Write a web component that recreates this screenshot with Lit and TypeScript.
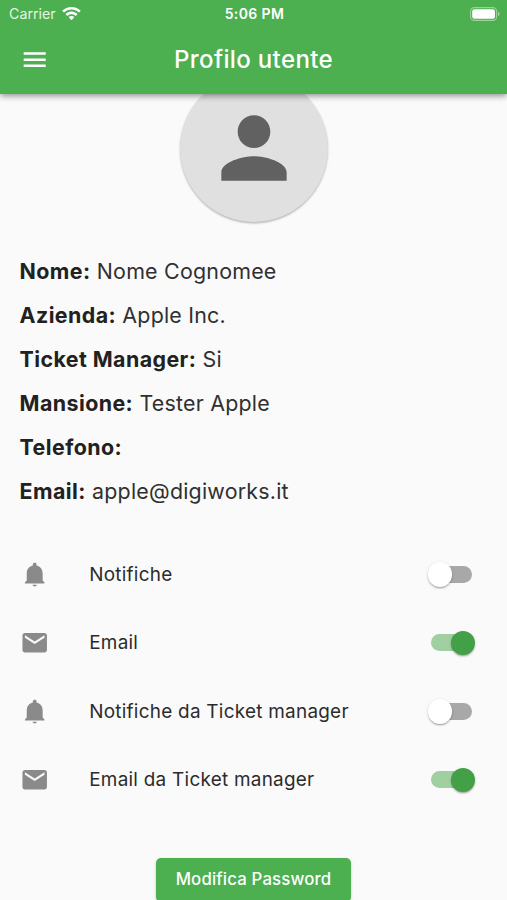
import { LitElement, html, css, svg } from "lit";
import { customElement, property } from "lit/decorators.js";
import { classMap } from "lit/directives/class-map.js";

const ICONS = {
  menu: "M3 18h18v-2H3v2zm0-5h18v-2H3v2zm0-7v2h18V6H3z",
  person: "M12 12c2.21 0 4-1.79 4-4s-1.79-4-4-4-4 1.79-4 4 1.79 4 4 4zm0 2c-2.67 0-8 1.34-8 4v2h16v-2c0-2.66-5.33-4-8-4z",
  bell: "M12 21.6c.9 0 1.6-.5 1.7-1.300h-3.400c.1.8.8 1.300 1.700 1.300zM18.500 16.800v-6c0-3.200-2-5.700-5-6.400V3.700c0-.83-.67-1.400-1.500-1.400s-1.500.57-1.500 1.400v.7c-3 .7-5 3.200-5 6.400v6L4 18.300v.9h16v-.9l-1.500-1.500z",
  mail: "M20 4H4c-1.1 0-1.99.9-1.99 2L2 18c0 1.1.9 2 2 2h16c1.1 0 2-.9 2-2V6c0-1.1-.9-2-2-2zm0 4l-8 5-8-5V6l8 5 8-5v2z",
};
type IconName = keyof typeof ICONS;

@customElement("md-icon")
class MdIcon extends LitElement {
  @property() name: IconName = "menu";
  static styles = css`
    :host { display: block; width: 29.4px; height: 29.4px; flex: none; }
    svg { display: block; width: 100%; height: 100%; fill: currentColor; }
  `;
  render() {
    return html`<svg viewBox="0 0 24 24">${svg`<path d=${ICONS[this.name]}></path>`}</svg>`;
  }
}

@customElement("md-switch")
class MdSwitch extends LitElement {
  @property({ type: Boolean }) on = false;
  static styles = css`
    :host { display: block; flex: none; }
    .track {
      display: flex; align-items: center; width: 40.4px; height: 17.2px;
      border-radius: 9px; background: #a8a8a8;
    }
    .track.on { background: #a0cfa2; justify-content: flex-end; }
    .thumb {
      flex: none; width: 24.5px; height: 24.5px; border-radius: 50%; background: #fff;
      margin: 0 -3.6px;
      box-shadow: 0 2px 2px -1px rgba(0,0,0,.2), 0 1px 1.5px rgba(0,0,0,.14), 0 1px 3.5px rgba(0,0,0,.12);
    }
    .on .thumb { background: #43a047; }
  `;
  render() {
    return html`<div class=${classMap({ track: true, on: this.on })}><div class="thumb"></div></div>`;
  }
}

@customElement("app-root")
class AppRoot extends LitElement {
  static styles = css`
    :host {
      display: flex; flex-direction: column; height: 900px; overflow: hidden;
      background: #fafafa; color: #212121;
      font-family: Inter, "Liberation Sans", sans-serif;
    }
    .top {
      position: relative; z-index: 1; flex: none; height: 94px; background: #4caf50; color: #fff;
      box-shadow: 0 2px 5px -1px rgba(0,0,0,.26), 0 4px 5px rgba(0,0,0,.12), 0 1px 9px rgba(0,0,0,.1);
    }
    .status {
      display: grid; grid-template-columns: 1fr auto 1fr; align-items: center;
      height: 27px; padding: 0 7px 0 9px;
    }
    .carrier { display: flex; align-items: center; gap: 6px; font-size: 14.2px; color: #e6f5e6; letter-spacing: .03px; }
    .clock { font-size: 14px; font-weight: 600; letter-spacing: .4px; }
    .wifi { display: block; width: 19px; height: 14px; fill: #fff; }
    .battery { display: block; width: 30px; height: 14px; justify-self: end; }
    .bar { display: grid; grid-template-columns: 1fr auto 1fr; align-items: center; height: 65.4px; padding: 0 20.3px; }
    .title { font-size: 24.1px; font-weight: 500; letter-spacing: .32px; }
    .avatar {
      flex: none; align-self: center; display: flex; align-items: center; justify-content: center;
      width: 148px; height: 148px; margin-top: -20px; border-radius: 50%;
      background: #e0e0e0; color: #616161; box-shadow: 0 1.5px 2px rgba(0,0,0,.26);
    }
    .avatar md-icon { width: 98px; height: 98px; }
    .info { margin: 27px 0 0 19.6px; }
    .line { height: 44px; line-height: 44px; font-size: 21.4px; letter-spacing: .22px; white-space: pre; color: #303030; }
    .line b { font-weight: 700; letter-spacing: .42px; color: #212121; }
    .list { margin-top: 27px; }
    .row { display: flex; align-items: center; height: 68.5px; padding: 0 35.5px 0 20.3px; }
    .row md-icon { color: #8a8a8a; }
    .label { flex: 1; padding-left: 39.5px; font-size: 18.9px; letter-spacing: .27px; white-space: nowrap; color: #2b2b2b; }
    .button {
      flex: none; align-self: center; margin-top: 43.5px; width: 194.5px; height: 44px; line-height: 43.600px;
      border-radius: 5px; background: #4caf50; color: #fff; text-align: center;
      font-size: 16.8px; font-weight: 500; letter-spacing: .15px;
      box-shadow: 0 1px 3px rgba(0,0,0,.2);
    }
  `;

  private info = [
    ["Nome:", "Nome Cognomee"],
    ["Azienda:", "Apple Inc."],
    ["Ticket Manager:", "Si"],
    ["Mansione:", "Tester Apple"],
    ["Telefono:", ""],
    ["Email:", "apple@digiworks.it"],
  ];
  private settings: { icon: IconName; label: string; on: boolean }[] = [
    { icon: "bell", label: "Notifiche", on: false },
    { icon: "mail", label: "Email", on: true },
    { icon: "bell", label: "Notifiche da Ticket manager", on: false },
    { icon: "mail", label: "Email da Ticket manager", on: true },
  ];

  render() {
    return html`
      <div class="top">
        <div class="status">
          <div class="carrier">
            <span>Carrier</span>
            <svg class="wifi" viewBox="0 0 19 14">
              <path d="M9.5 0C5.9 0 2.6 1.4.2 3.7l1.8 1.900C4 3.800 6.600 2.600 9.500 2.600S15 3.800 17 5.600l1.800-1.900C16.400 1.400 13.100 0 9.500 0z"></path>
              <path d="M9.500 4.600c-2.300 0-4.400.9-6 2.400l1.800 1.900c1.100-1 2.600-1.700 4.200-1.700s3.100.7 4.200 1.700l1.800-1.900c-1.600-1.500-3.700-2.400-6-2.400z"></path>
              <path d="M9.500 9c-1.100 0-2.100.4-2.900 1.100l2.900 3.200 2.900-3.200C11.600 9.400 10.600 9 9.500 9z"></path>
            </svg>
          </div>
          <div class="clock">5:06 PM</div>
          <svg class="battery" viewBox="0 0 30 14">
            <rect x=".6" y=".6" width="26" height="12.800" rx="3.600" fill="none" stroke="#9bd29d" stroke-width="1.100"></rect>
            <rect x="2.200" y="2.200" width="22.800" height="9.600" rx="2.200" fill="#fff"></rect>
            <path d="M28 4.800v4.400c1-.4 1.600-1.200 1.600-2.200s-.6-1.800-1.600-2.200z" fill="#9bd29d"></path>
          </svg>
        </div>
        <div class="bar">
          <md-icon name="menu"></md-icon>
          <div class="title">Profilo utente</div>
        </div>
      </div>
      <div class="avatar"><md-icon name="person"></md-icon></div>
      <div class="info">
        ${this.info.map(([k, v]) => html`<div class="line"><b>${k}</b> ${v}</div>`)}
      </div>
      <div class="list">
        ${this.settings.map(
          (s) => html`<div class="row">
            <md-icon name=${s.icon}></md-icon>
            <div class="label">${s.label}</div>
            <md-switch ?on=${s.on}></md-switch>
          </div>`
        )}
      </div>
      <div class="button">Modifica Password</div>
    `;
  }
}
